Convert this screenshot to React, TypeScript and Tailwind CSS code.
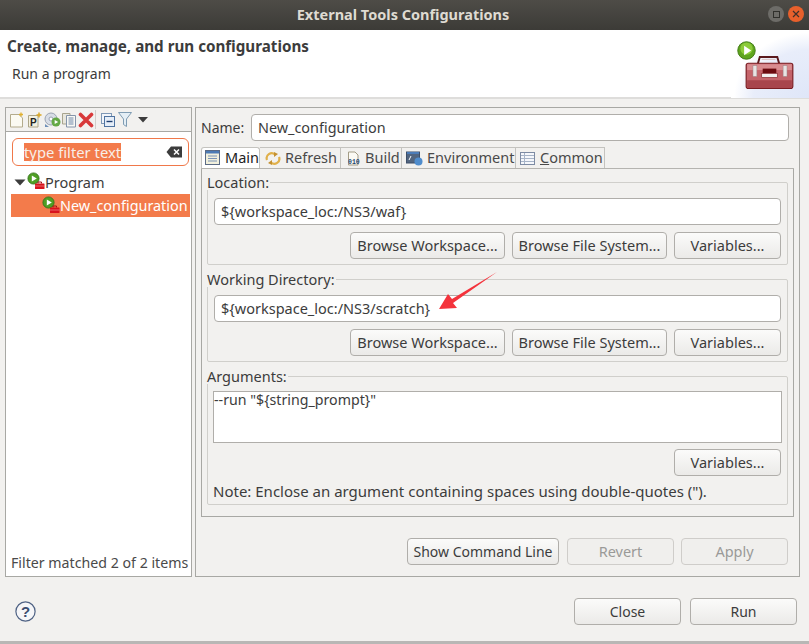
import { ReactNode } from 'react'

const font = { fontFamily: '"Noto Sans", "Open Sans", sans-serif' }

function PlayIcon({ size = 14 }: { size?: number }) {
  return (
    <svg width={size} height={size} viewBox="0 0 20 20">
      <circle cx="10" cy="10" r="9.2" fill="#5fa51e" stroke="#3f7a12" strokeWidth="1" />
      <circle cx="10" cy="8" r="6.5" fill="#8ccb3a" />
      <path d="M7.5 5 L15 10 L7.5 15 Z" fill="#ffffff" />
    </svg>
  )
}

function RunConfigIcon() {
  return (
    <svg width="18" height="18" viewBox="0 0 18 18">
      <circle cx="6.5" cy="6.5" r="5.6" fill="#4f9e24" stroke="#2f6f16" strokeWidth="0.8" />
      <path d="M4.8 3.4 L9.8 6.5 L4.8 9.6 Z" fill="#fff" />
      <path d="M11 11.5 v-1.5 h3.5 v1.5" fill="none" stroke="#a20e14" strokeWidth="1" />
      <rect x="8" y="11.5" width="9.5" height="5.5" rx="0.5" fill="#d8121c" />
      <path d="M8 14 h9.5" stroke="#f6b8b8" strokeWidth="0.5" />
    </svg>
  )
}

function Toolbox() {
  return (
    <svg width="49" height="34" viewBox="0 0 50 35">
      <path d="M13 9 L15 2 H33 L35 9" fill="none" stroke="#5b1a1d" strokeWidth="2" />
      <path d="M17 4.5 H31" stroke="#d9c0c0" strokeWidth="1" />
      <rect x="1" y="8.5" width="48" height="26" rx="2" fill="#c4636a" stroke="#7a1d22" strokeWidth="1.2" />
      <rect x="2" y="9.5" width="46" height="6" fill="#d98c90" />
      <rect x="2" y="26" width="46" height="8" fill="#a8454c" />
      <rect x="8" y="11" width="4" height="11" fill="#e8e4e4" stroke="#9a8a8a" strokeWidth="0.5" />
      <rect x="39" y="11" width="4" height="11" fill="#e8e4e4" stroke="#9a8a8a" strokeWidth="0.5" />
      <rect x="18" y="14" width="14" height="5" fill="#6b0b10" />
      <rect x="17" y="19" width="16" height="4" fill="#f2eeee" stroke="#7a1d22" strokeWidth="0.6" />
    </svg>
  )
}

function HeaderArt() {
  return (
    <div className="relative h-[68px] w-[78px] self-start bg-[radial-gradient(ellipse_at_100%_100%,#dfe6f8_0%,#e8edfa_50%,#ffffff_68%)]">
      <div className="absolute left-[6px] top-[11px]">
        <PlayIcon size={19} />
      </div>
      <div className="absolute left-[14px] top-[25px]">
        <Toolbox />
      </div>
    </div>
  )
}

function ToolbarIcons() {
  return (
    <div className="flex h-[24px] items-center border-b border-[#a8a8a4] pl-[3px]">
      <svg width="16" height="16" viewBox="0 0 16 16">
        <path d="M1.5 2.5 H10 L13.5 6 V15 H1.5 Z" fill="#fbfaf2" stroke="#b3ab8c" />
        <path d="M12 0.5 v4 M10 2.5 h4" stroke="#e0b030" strokeWidth="1.3" />
      </svg>
      <svg width="18" height="16" viewBox="0 0 18 16" className="ml-[1px]">
        <path d="M2.5 3.5 H12 V15 H2.5 Z" fill="#f4f1e0" stroke="#aca588" />
        <text x="4" y="13.5" fontSize="10" fontWeight="700" fill="#222" fontFamily="Liberation Sans">P</text>
        <path d="M13 0.5 v5 M10.5 3 h5" stroke="#d9a520" strokeWidth="1.4" />
      </svg>
      <svg width="17" height="16" viewBox="0 0 17 16">
        <circle cx="7" cy="7" r="6" fill="#d8dde6" stroke="#9aa3b3" />
        <circle cx="7" cy="7" r="2" fill="#fff" stroke="#9aa3b3" />
        <circle cx="12" cy="10" r="4.5" fill="#63a845" />
        <path d="M10.7 8 L14.2 10 L10.7 12 Z" fill="#fff" />
        <path d="M1 12 L5 15 H1 Z" fill="#6e8fb8" />
      </svg>
      <svg width="16" height="16" viewBox="0 0 16 16">
        <path d="M1.5 1.5 H9 V12 H1.5 Z" fill="#e8e6dc" stroke="#a8a48e" />
        <path d="M5.5 3.5 H14.5 V15 H5.5 Z" fill="#f8f8f4" stroke="#8494aa" />
        <path d="M7.5 6 H12.5 M7.5 8 H12.5 M7.5 10 H12.5 M7.5 12 H12.5" stroke="#6f87a8" />
      </svg>
      <svg width="16" height="16" viewBox="0 0 16 16" className="ml-[1px]">
        <path d="M2.5 2.5 L13.5 13.5 M13.5 2.5 L2.5 13.5" stroke="#d8393a" strokeWidth="3.6" strokeLinecap="round" />
      </svg>
      <div className="ml-[1px] h-[19px] w-px bg-[#d0cfcb]" />
      <svg width="16" height="16" viewBox="0 0 16 16" className="ml-[4px]">
        <rect x="1.5" y="1.5" width="10" height="10" fill="#f2f5fa" stroke="#7f98b6" />
        <rect x="4.5" y="4.5" width="10" height="10" fill="#e6eef8" stroke="#4f73a0" />
        <path d="M6.5 9.5 H12.5" stroke="#1f3f70" strokeWidth="1.4" />
      </svg>
      <svg width="16" height="17" viewBox="0 0 16 17" className="ml-[1px]">
        <path d="M1.5 1.5 H14.5 L9.5 8 V15.5 L6.5 13.5 V8 Z" fill="#e4eef5" stroke="#7f9cb3" />
      </svg>
      <svg width="14" height="8" viewBox="0 0 14 8" className="ml-[3px]">
        <path d="M2 1 H12 L7 6.5 Z" fill="#3c3c3c" />
      </svg>
    </div>
  )
}

function Btn({ children, className = '', disabled = false }: { children: ReactNode; className?: string; disabled?: boolean }) {
  return (
    <button
      className={`flex h-[27px] items-center justify-center rounded-[4px] border ${
        disabled
          ? 'border-[#cfcdca] bg-[#f0efed] text-[#9a9a98]'
          : 'border-[#b0aeaa] bg-gradient-to-b from-[#fbfbfa] to-[#ebeae8] text-[#3c3c3c]'
      } ${className}`}
    >
      {children}
    </button>
  )
}

function Group({ label, children, className = '' }: { label: string; children: ReactNode; className?: string }) {
  return (
    <fieldset className={`rounded-[2px] border border-[#d0cfcb] pl-[6px] pr-[6px] ${className}`}>
      <legend className="ml-[-7px] pr-[1px] text-[14.5px] leading-[16px] text-[#3c3c3c]">{label}</legend>
      {children}
    </fieldset>
  )
}

function TextBox({ value }: { value: string }) {
  return (
    <div className="mt-[8px] flex h-[27px] items-center rounded-[4px] border border-[#b0aeaa] bg-white pl-[6px] text-[14.5px] text-[#3c3c3c]">
      {value}
    </div>
  )
}

function BrowseButtons() {
  return (
    <div className="mt-[7px] flex justify-end gap-[7px] text-[14.5px]">
      <Btn className="w-[155px]">Browse Workspace...</Btn>
      <Btn className="w-[155px]">Browse File System...</Btn>
      <Btn className="w-[107px]">Variables...</Btn>
    </div>
  )
}

function Tab({ icon, label, active = false, className = '' }: { icon: ReactNode; label: ReactNode; active?: boolean; className?: string }) {
  return (
    <div
      className={`flex h-[21px] items-center border-r border-t border-[#c4c3bf] text-[14.5px] ${
        active ? 'rounded-t-[3px] border-l bg-white pb-[1px] text-[#222222]' : 'text-[#4a4a4a]'
      } ${className}`}
    >
      {icon}
      <span>{label}</span>
    </div>
  )
}

const tabIcons = {
  main: (
    <svg width="15" height="15" viewBox="0 0 15 15">
      <rect x="0.5" y="0.5" width="14" height="14" fill="#f2f0dc" stroke="#5b6b85" />
      <rect x="1" y="1" width="13" height="2.5" fill="#4d7bb5" />
      <path d="M3 6 H12 M3 8.5 H12 M3 11 H12" stroke="#7a94b8" />
    </svg>
  ),
  refresh: (
    <svg width="16" height="15" viewBox="0 0 16 15">
      <path d="M2 9 A5 5 0 0 1 10 3.5 M14 6 A5 5 0 0 1 6 11.5" fill="none" stroke="#e0b04a" strokeWidth="2.2" />
      <path d="M9 1 L13 3 L9 6 Z M7 9 L3 12 L7 14 Z" fill="#c49030" />
    </svg>
  ),
  build: (
    <svg width="15" height="15" viewBox="0 0 15 15">
      <path d="M1.5 1 H8 L11 4 V14 H1.5 Z" fill="#fbfaf4" stroke="#a39c85" />
      <text x="1" y="13" fontSize="6.5" fontWeight="700" fill="#24466f" fontFamily="Liberation Mono">010</text>
    </svg>
  ),
  env: (
    <svg width="17" height="15" viewBox="0 0 17 15">
      <rect x="0.5" y="1" width="13" height="11" fill="#52657f" stroke="#3d4f69" />
      <rect x="1" y="1" width="12" height="2" fill="#4c7cb8" />
      <path d="M3 9 L5 5" stroke="#fff" />
      <circle cx="12.5" cy="10.5" r="4" fill="#4f8ccc" />
    </svg>
  ),
  common: (
    <svg width="15" height="15" viewBox="0 0 15 15">
      <rect x="0.5" y="1.5" width="14" height="12" fill="#f5f7fb" stroke="#7d8ba3" />
      <path d="M1 4.5 H14 M1 7.5 H14 M1 10.5 H14 M4.5 2 V13" stroke="#a7b4c8" />
    </svg>
  ),
}

function LeftPanel() {
  return (
    <div className="flex w-[187px] flex-col border border-[#a8a8a4] bg-white">
      <div className="bg-[#f2f1ef]">
        <ToolbarIcons />
      </div>
      <div className="ml-[6px] mr-[2px] mt-[6px] flex h-[28px] items-center rounded-[6px] border border-[#f0784a] bg-white pl-[11px] pr-[5px]">
        <span className="bg-[#f37b4b] text-[14.8px] leading-[18px] text-[#f8eee8]">type filter text</span>
        <svg width="17" height="12" viewBox="0 0 17 12" className="ml-auto">
          <path d="M5 0.5 H16 V11.5 H5 L0.5 6 Z" fill="#3c3c3c" />
          <path d="M8 3.5 L13 8.5 M13 3.5 L8 8.5" stroke="#fff" strokeWidth="1.5" />
        </svg>
      </div>
      <div className="mt-[5px] flex h-[23px] items-center pl-[8px] text-[14.5px] text-[#3c3c3c]">
        <svg width="12" height="7" viewBox="0 0 12 7">
          <path d="M0.5 0.5 H11.5 L6 6.5 Z" fill="#3c3c3c" />
        </svg>
        <span className="mb-[3px] ml-[1px]">
          <RunConfigIcon />
        </span>
        <span>Program</span>
      </div>
      <div className="ml-[5px] mr-[1px] flex h-[23px] items-center bg-[#f37b4b] pl-[31px] text-[14.4px] text-white">
        <span className="mb-[2px]">
          <RunConfigIcon />
        </span>
        <span>New_configuration</span>
      </div>
      <div className="mt-auto pb-[3px] pl-[5px] text-[14.2px] leading-[20px] text-[#4a4a4a]">Filter matched 2 of 2 items</div>
    </div>
  )
}

function RightPanel() {
  return (
    <div className="flex w-[605px] flex-col border border-[#a8a8a4] px-[5px]">
      <div className="mt-[6px] flex h-[27px] items-center">
        <span className="w-[50px] text-[14px] text-[#3c3c3c]">Name:</span>
        <div className="flex h-[27px] w-[538px] items-center rounded-[4px] border border-[#b0aeaa] bg-white pl-[6px] text-[14.4px] text-[#3c3c3c]">
          New_configuration
        </div>
      </div>
      <div className="mt-[7px] flex h-[21px] items-end border-b border-[#b5b4b0]">
        <Tab active icon={tabIcons.main} label="Main" className="w-[59px] gap-[5px] pl-[3px]" />
        <Tab icon={tabIcons.refresh} label="Refresh" className="w-[81px] gap-[4px] pl-[5px]" />
        <Tab icon={tabIcons.build} label="Build" className="w-[61px] gap-[3px] pl-[6px]" />
        <Tab icon={tabIcons.env} label="Environment" className="w-[114px] gap-[4px] pl-[4px]" />
        <Tab
          icon={tabIcons.common}
          label={
            <>
              <span className="underline">C</span>ommon
            </>
          }
          className="w-[89px] gap-[5px] pl-[4px]"
        />
      </div>
      <div className="flex h-[348px] flex-col gap-[6px] border border-t-0 border-[#a8a8a4] px-[5px] pt-[5px]">
        <Group label="Location:" className="h-[91px]">
          <TextBox value="${workspace_loc:/NS3/waf}" />
          <BrowseButtons />
        </Group>
        <Group label="Working Directory:" className="h-[91px]">
          <TextBox value="${workspace_loc:/NS3/scratch}" />
          <BrowseButtons />
        </Group>
        <Group label="Arguments:" className="h-[137px]">
          <div className="-mx-px mt-[7px] h-[52px] border border-[#b0aeaa] bg-white text-[14.2px] leading-[15px] text-[#3c3c3c]">
            --run "{'${string_prompt}'}"
          </div>
          <div className="mt-[6px] flex justify-end text-[14.5px]">
            <Btn className="w-[107px]">Variables...</Btn>
          </div>
          <p className="-ml-px mt-[5px] whitespace-nowrap text-[15px] leading-[20px] text-[#3c3c3c]">
            Note: Enclose an argument containing spaces using double-quotes (").
          </p>
        </Group>
      </div>
      <div className="mt-[21px] flex justify-end gap-[7px] pr-[6px] text-[14.5px]">
        <Btn className="mr-[1px] w-[152px] text-[14px]">Show Command Line</Btn>
        <Btn disabled className="w-[107px]">Revert</Btn>
        <Btn disabled className="w-[107px]">Apply</Btn>
      </div>
    </div>
  )
}

export default function App() {
  return (
    <div className="relative flex h-[644px] w-[809px] flex-col overflow-hidden bg-[#f2f1ef]" style={font}>
      <div className="relative flex h-[30px] items-center justify-center bg-gradient-to-b from-[#4e4c47] to-[#3c3b37] pr-[3px]">
        <span className="text-[14.5px] font-bold text-[#dfdbd2]">External Tools Configurations</span>
        <div className="absolute right-[5px] top-[6px] flex gap-[4px]">
          <div className="flex h-[16px] w-[16px] items-center justify-center rounded-full bg-[#6d6c68]">
            <div className="h-[7px] w-[7px] border border-[#30302c]" />
          </div>
          <div className="flex h-[16px] w-[16px] items-center justify-center rounded-full bg-[#e8602c]">
            <svg width="8" height="8" viewBox="0 0 8 8">
              <path d="M1 1 L7 7 M7 1 L1 7" stroke="#40302a" strokeWidth="1.2" />
            </svg>
          </div>
        </div>
      </div>
      <div className="flex h-[69px] justify-between border-b-2 border-[#dedddb] bg-white">
        <div className="pl-[7px] pt-[7px] text-[#3c3c3c]">
          <div className="text-[15.2px] font-bold leading-[19px]">Create, manage, and run configurations</div>
          <div className="mt-[8px] pl-[5px] text-[14px] leading-[19px]">Run a program</div>
        </div>
        <HeaderArt />
      </div>
      <div className="mt-[8px] flex h-[470px] gap-[3px] pl-[5px]">
        <LeftPanel />
        <RightPanel />
      </div>
      <div className="mt-[21px] flex items-center pl-[15px] pr-[12px]">
        <svg width="21" height="21" viewBox="0 0 21 21">
          <circle cx="10.5" cy="10.5" r="9.6" fill="#f6f6f8" stroke="#4f6284" strokeWidth="1.2" />
          <text x="10.5" y="16" textAnchor="middle" fontSize="15" fontWeight="700" fill="#3b4d70" fontFamily="Liberation Sans">?</text>
        </svg>
        <div className="ml-auto flex gap-[9px] text-[14px]">
          <Btn className="w-[107px]">Close</Btn>
          <Btn className="w-[107px]">Run</Btn>
        </div>
      </div>
      <div className="absolute bottom-0 left-0 h-[3px] w-full bg-[#b8b7b5]" />
      <svg width="62" height="42" viewBox="0 0 62 42" className="absolute left-[438px] top-[272px]">
        <path d="M59 0 L14 27 L10 22 L1 37 L19 36 L15 31 Z" fill="#f4333c" />
      </svg>
    </div>
  )
}
